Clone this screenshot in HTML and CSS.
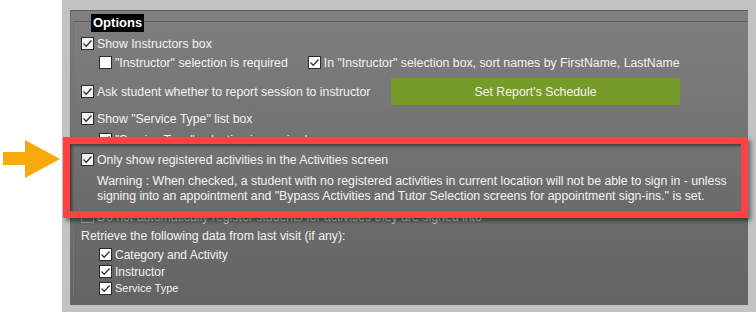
FILE: index.html
```html
<!DOCTYPE html>
<html lang="en">
<head>
<meta charset="UTF-8">
<title>Options</title>
<link rel="stylesheet" href="styles.css">
</head>
<body>

<div class="gutter">
  <svg class="arrow" width="57" height="38" viewBox="0 0 57 38">
    <polygon points="0,12 22,12 22,0 57,19 22,38 22,25 0,25" fill="#f8aa0b"/>
  </svg>
</div>

<div class="frame">
  <div class="panel">
    <div class="rule-top"></div>
    <div class="options">
      <div class="legend">Options</div>

      <div class="row r1">
        <span class="check on light"></span><span>Show Instructors box</span>
      </div>
      <div class="row sub r2">
        <span class="check"></span><span class="first">"Instructor" selection is required</span>
        <span class="check on"></span><span>In "Instructor" selection box, sort names by FirstName, LastName</span>
      </div>
      <div class="row r3">
        <span class="check on light"></span><span>Ask student whether to report session to instructor</span>
        <button class="schedule">Set Report's Schedule</button>
      </div>
      <div class="row r4">
        <span class="check on light"></span><span>Show "Service Type" list box</span>
      </div>
      <div class="row sub r5">
        <span class="check on"></span><span>"Service Type" selection is required</span>
      </div>

      <div class="highlight">
        <div class="row">
          <span class="check on light"></span><span>Only show registered activities in the Activities screen</span>
        </div>
        <div class="warning">Warning : When checked, a student with no registered activities in current location will not be able to sign in - unless<br>signing into an appointment and "Bypass Activities and Tutor Selection screens for appointment sign-ins." is set.</div>
      </div>

      <div class="row r6 disabled">
        <span class="check"></span><span>Do not automatically register students for activities they are signed into</span>
      </div>
      <div class="retrieve">Retrieve the following data from last visit (if any):</div>
      <div class="row sub small">
        <span class="check on"></span><span>Category and Activity</span>
      </div>
      <div class="row sub small">
        <span class="check on"></span><span>Instructor</span>
      </div>
      <div class="row sub small last">
        <span class="check on"></span><span class="tiny">Service Type</span>
      </div>
    </div>
  </div>
</div>

</body>
</html>
```

FILE: styles.css
```css
body {
  margin: 0;
  width: 756px;
  height: 312px;
  display: flex;
  background: #fff;
  font-family: "Liberation Sans", Arial, sans-serif;
  font-size: 12.3px;
  color: #f3f3f3;
  overflow: hidden;
}
.gutter {
  width: 62px;
  position: relative;
}
.arrow {
  position: absolute;
  left: 3px;
  top: 140px;
}
.frame {
  flex: 1;
  background: #c2c2c2;
  padding: 8px 8px 9px 8px;
}
.panel {
  height: 295px;
  background: linear-gradient(#7f7f7f, #636363);
  border-left: 1px solid #6a6a6a;
  box-sizing: border-box;
}
.rule-top {
  margin-top: 2px;
  border-top: 1px solid #5c5c5c;
}
.options {
  margin-top: 10px;
  margin-left: 2px;
  border-top: 1px solid #5c5c5c;
  border-left: 1px solid #737373;
  padding-left: 7px;
}
.legend {
  width: max-content;
  margin-top: -8px;
  margin-left: 10px;
  height: 18px;
  line-height: 18px;
  padding: 0 2px;
  background: #000;
  color: #fff;
  font-weight: bold;
  font-size: 13px;
}
.row {
  display: flex;
  align-items: center;
  height: 19px;
  gap: 3px;
  white-space: nowrap;
}
.sub {
  padding-left: 18px;
}
.check {
  width: 13px;
  height: 13px;
  box-sizing: border-box;
  border: 1px solid #2b2b2b;
  background: #fff;
  flex: none;
}
.check.light {
  background: #f2f2f2;
}
.check.on {
  background-image: url("data:image/svg+xml,%3Csvg xmlns='http://www.w3.org/2000/svg' width='11' height='11'%3E%3Cpolyline points='1.5,5.5 4.2,8.2 9.5,2.5' fill='none' stroke='%23333' stroke-width='1.3'/%3E%3C/svg%3E");
  background-repeat: no-repeat;
}
.r1 { margin-top: 2px; }
.r2 .first { margin-right: 17px; }
.r3 {
  height: 27px;
  margin-top: 6px;
}
.schedule {
  margin-left: auto;
  margin-right: 68px;
  width: 289px;
  height: 27px;
  border: none;
  background: #779b28;
  color: #f3f3f3;
  font-family: "Liberation Sans", Arial, sans-serif;
  font-size: 12.3px;
}
.r4 { margin-top: 4px; }
.r5 { margin-top: 2px; }
.highlight {
  position: relative;
  z-index: 1;
  margin: -12px 0 0 -18px;
  height: 81px;
  box-sizing: border-box;
  border: 7px solid #fe4242;
  background: linear-gradient(#737373, #6a6a6a);
  box-shadow: inset 2px 2px 3px rgba(0,0,0,0.45), 3px 3px 4px rgba(0,0,0,0.45);
  padding: 6px 0 0 11px;
}
.warning {
  padding-left: 16px;
  margin-top: 5px;
  line-height: 15px;
  white-space: nowrap;
}
.r6 { margin-top: -11px; }
.disabled { color: #c6c6c6; }
.disabled .check {
  background: #6a6a6a;
  border-color: #9a9a9a;
}
.retrieve {
  height: 19px;
  line-height: 19px;
  margin-top: 1px;
}
.small { height: 17px; }
.small span { font-size: 12px; }
.last { height: 16px; }
.small .tiny { font-size: 11px; }
```
